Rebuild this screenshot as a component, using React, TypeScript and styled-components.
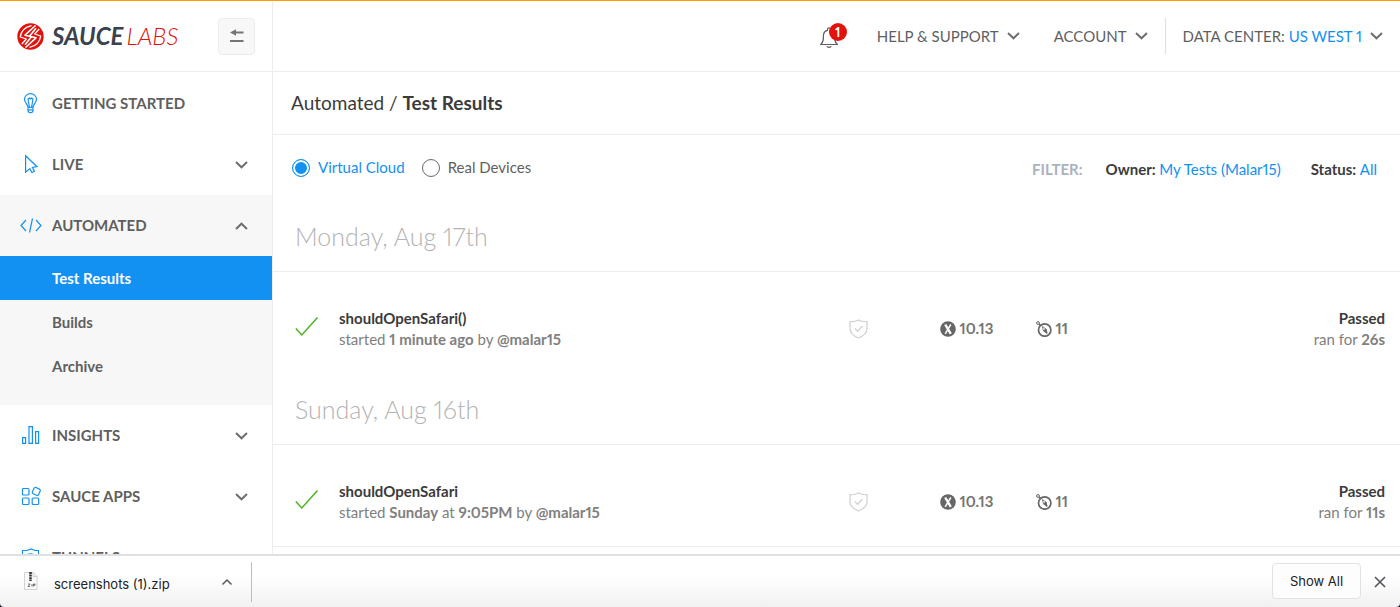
import React from "react";
import styled, { createGlobalStyle, css } from "styled-components";

const GlobalStyle = createGlobalStyle`
  *, *::before, *::after { box-sizing: border-box; }
  body {
    margin: 0;
    background: #0b1320;
    color: #3b3b3b;
    font-family: Lato, "Open Sans", sans-serif;
    font-size: 16px;
    font-variant-numeric: proportional-nums;
    line-height: 21px;
  }
  h1, h2, p, ul { margin: 0; padding: 0; }
  ul { list-style: none; }
  a { text-decoration: none; }
  button { font: inherit; font-variant-numeric: inherit; color: inherit; background: none; border: 0; padding: 0; cursor: pointer; }
  svg { display: block; flex: none; }
`;

const blue = "#1391f2";
const line = "#ececec";

const Window = styled.div`
  display: flex;
  flex-direction: column;
  height: 100vh;
`;

const Page = styled.div`
  display: flex;
  flex: 1;
  min-height: 0;
  overflow: hidden;
  background: #fff;
  border-top: 1px solid #ff9a00;
`;

/* ---------- Sidebar ---------- */

const Sidebar = styled.aside`
  flex: none;
  width: 273px;
  border-right: 1px solid ${line};
`;

const Brand = styled.div`
  display: flex;
  align-items: center;
  justify-content: space-between;
  height: 71px;
  padding: 0 17px;
  border-bottom: 1px solid ${line};
`;

const Logo = styled.a`
  display: flex;
  align-items: center;
  gap: 8px;
  color: #3a424d;
  font-size: 24px;
  line-height: 28px;
  font-style: italic;
  font-weight: 700;
`;

const LogoThin = styled.span`
  margin-left: 3px;
  color: #e2120b;
  font-weight: 300;
`;

const CollapseButton = styled.button`
  display: grid;
  place-items: center;
  width: 37px;
  height: 37px;
  border: 1px solid ${line};
  border-radius: 4px;
  background: #f8f8f8;
`;

const Nav = styled.nav`
  padding-top: 1px;
`;

const Section = styled.div<{ $open?: boolean }>`
  ${(p) =>
    p.$open &&
    css`
      padding-bottom: 17px;
      background: #f7f7f7;
    `}
`;

const SectionButton = styled.button`
  display: grid;
  grid-template-columns: 22px 1fr 13px;
  align-items: center;
  gap: 10px;
  width: 100%;
  height: 61px;
  padding: 0 24px 0 20px;
  color: #5f5f5f;
  font-size: 15px;
  font-weight: 700;
  text-align: left;
`;

const SubLink = styled.a<{ $active?: boolean }>`
  display: flex;
  align-items: center;
  height: 44px;
  padding-left: 52px;
  color: ${(p) => (p.$active ? "#fff" : "#5f5f5f")};
  background: ${(p) => (p.$active ? blue : "transparent")};
  font-size: 15px;
  font-weight: 700;
`;

/* ---------- Main column ---------- */

const Main = styled.div`
  flex: 1;
  min-width: 0;
`;

const TopBar = styled.header`
  display: flex;
  align-items: center;
  justify-content: flex-end;
  height: 71px;
  padding-right: 17px;
  border-bottom: 1px solid ${line};
`;

const BellButton = styled.button`
  position: relative;
  margin-right: 39px;
  padding-top: 4px;
`;

const Badge = styled.span`
  position: absolute;
  top: 0;
  right: -9px;
  width: 18px;
  height: 18px;
  border-radius: 50%;
  background: #e3120b;
  color: #fff;
  font-size: 13px;
  font-weight: 700;
  line-height: 18px;
  text-align: center;
`;

const MenuButton = styled.button`
  display: flex;
  align-items: center;
  gap: 8px;
  color: #5f5f5f;
  font-size: 15px;
  & + & { margin-left: 34px; }
`;

const Divider = styled.span`
  width: 1px;
  height: 36px;
  margin: 0 17px;
  background: #dedede;
`;

const Blue = styled.span`
  color: ${blue};
`;

const Title = styled.h1`
  display: flex;
  align-items: center;
  height: 63px;
  padding: 0 0 1px 18px;
  border-bottom: 1px solid ${line};
  font-size: 19px;
  font-weight: 400;
  white-space: pre;
`;

const Toolbar = styled.div`
  display: flex;
  align-items: center;
  justify-content: space-between;
  height: 65px;
  padding: 0 23px 0 19px;
`;

const Choices = styled.div`
  display: flex;
  gap: 17px;
`;

const Choice = styled.label`
  display: flex;
  align-items: center;
  gap: 8px;
  color: #5f5f5f;
  font-size: 15px;
  &:has(input:checked) { color: ${blue}; }
`;

const Radio = styled.input`
  appearance: none;
  width: 18px;
  height: 18px;
  margin: 0;
  border: 1px solid #6b6b6b;
  border-radius: 50%;
  &:checked {
    border-color: ${blue};
    background: ${blue};
    box-shadow: inset 0 0 0 2px #fff;
  }
`;

const Filters = styled.div`
  display: flex;
  gap: 30px;
  padding-top: 4px;
  font-size: 15px;
`;

const FilterLabel = styled.span`
  margin-right: -7px;
  color: #aab3bd;
  font-weight: 700;
`;

const FilterButton = styled.button`
  font-weight: 700;
  ${Blue} { font-weight: 400; }
`;

const Day = styled.h2`
  display: flex;
  align-items: center;
  height: 72px;
  padding: 2px 22px 0;
  border-bottom: 1px solid ${line};
  color: #b3b3b3;
  font-size: 25px;
  font-weight: 300;
`;

const Tests = styled.ul<{ $ruled?: boolean }>`
  border-bottom: ${(p) => (p.$ruled ? `1px solid ${line}` : 0)};
`;

const Row = styled.li`
  display: grid;
  grid-template-columns: 44px 23fr 91px 96px 60px 13fr;
  align-items: center;
  height: 101px;
  padding: 12px 15px 0 22px;
  color: #808080;
  font-size: 15px;
`;

const TestName = styled.a`
  color: #3b3b3b;
  font-weight: 700;
`;

const Status = styled.p`
  color: #3b3b3b;
  font-weight: 700;
`;

const Platform = styled.span`
  display: flex;
  align-items: center;
  gap: 3px;
  color: #757575;
  font-weight: 700;
`;

const Outcome = styled.div`
  text-align: right;
`;

/* ---------- Download shelf ---------- */

const Shelf = styled.footer`
  display: flex;
  align-items: center;
  flex: none;
  height: 53px;
  padding: 0 14px 0 22px;
  border-top: 2px solid #dfe0e4;
  border-radius: 0 0 4px 4px;
  background: linear-gradient(#fff 40%, #f1f1f1);
  color: #202124;
  font-family: Inter, sans-serif;
  font-size: 13px;
`;

const Download = styled.button`
  display: flex;
  align-items: center;
  width: 230px;
  height: 40px;
  padding-right: 18px;
  border-right: 1px solid #bcbcbc;
`;

const FileName = styled.span`
  flex: 1;
  padding: 5px 0 0 15px;
  text-align: left;
`;

const ShowAll = styled.button`
  width: 89px;
  height: 36px;
  margin: 0 13px 1px auto;
  border: 1px solid #e2e2e4;
  border-radius: 4px;
  background: #fdfdfd;
`;

/* ---------- Icons ---------- */

const Chevron = ({ up }: { up?: boolean }) => (
  <svg width="13" height="8" viewBox="0 0 13 8" fill="none" stroke="#6e6e6e" strokeWidth="2">
    <path d={up ? "M1 7l5.500-5.300L12 7" : "M1 1l5.500 5.300L12 1"} />
  </svg>
);

const ShelfChevron = () => (
  <svg width="12" height="8" viewBox="0 0 12 8" fill="none" stroke="#55585c" strokeWidth="1.500">
    <path d="M1.500 6.500L6 2l4.500 4.500" />
  </svg>
);

const Outline = ({ children }: { children: React.ReactNode }) => (
  <svg width="22" height="22" viewBox="0 0 22 22" fill="none" stroke={blue} strokeWidth="1.200">
    {children}
  </svg>
);

const Bulb = () => (
  <Outline>
    <path d="M8 14.500c0-3.500-3.500-4.500-3.500-8.200a6 5.600 0 0 1 12 0c0 3.700-3.500 4.700-3.500 8.200zM8 14.500v3c0 1.500 1.200 2.200 2.500 2.200s2.500-.7 2.500-2.200v-3M8 16.800h5M9.500 14.500L8 6l1.500-1 1 1 1-1L13 6l-1.500 8.500" />
  </Outline>
);
const Cursor = () => (
  <Outline>
    <path d="M5.600 1.700v16.500l4.200-3.600 2.100 3.900 2.500-1.200-2-3.900 4.600-.7z" />
  </Outline>
);
const Code = () => (
  <Outline>
    <path d="M6 5L1 10.500 6 16M16 5l5 5.500-5 5.500M12.500 3.500l-3 14" />
  </Outline>
);
const Bars = () => (
  <Outline>
    <path d="M2.600 12.600h3v5.800h-3zM9 1.600h3.400v16.800H9zM15.600 6.600h3v11.800h-3z" />
  </Outline>
);
const Apps = () => (
  <Outline>
    <rect x="2.500" y="2.500" width="6.500" height="6.500" rx="1" />
    <rect x="2.500" y="12" width="6.500" height="6.500" rx="1" />
    <rect x="12.200" y="12" width="6.500" height="6.500" rx="1" />
    <rect x="12.900" y="2" width="6.800" height="6.800" rx="1.500" transform="rotate(25 16.300 5.400)" />
  </Outline>
);
const Tunnel = () => (
  <Outline>
    <path d="M2.500 3.500H7l4-1.500 4 1.500h3.500v10c0 3-4 5-8 6.500-4-1.500-8-3.500-8-6.500zM6 9c2-3 7-3 9 0" />
  </Outline>
);

const LogoMark = () => (
  <svg width="27" height="27" viewBox="0 0 27 27">
    <circle cx="13.500" cy="13.500" r="13.200" fill="#e2120b" />
    <g fill="none" stroke="#fff" strokeWidth="1.600" strokeLinejoin="round">
      <path d="M18.500 2.500L8 12.200l6.500 1.600-6.500 8" />
      <path d="M8.500 24.500L19 14.800l-6.500-1.600 6.500-8" />
      <path d="M14.500 2.600C8 4 4 8.500 3.300 14l6 2-4.500 5" strokeWidth="1.300" />
      <path d="M12.500 24.400C19 23 23 18.500 23.700 13l-6-2 4.500-5" strokeWidth="1.300" />
    </g>
  </svg>
);

const CollapseIcon = () => (
  <svg width="14" height="14" viewBox="0 0 14 14" fill="#757575">
    <path d="M0 3.500L6 .2v2.300h7.500v2H6v2.300zM0 11h13.500v2H0z" />
  </svg>
);

const Bell = () => (
  <svg width="18" height="22" viewBox="0 0 18 22" fill="none" stroke="#5f5f5f" strokeWidth="1.200">
    <path d="M.8 17.500h16.500c-2-1.800-2.600-3.500-2.600-6.500V9c0-3-1.700-5-4-5.600V2.600a1.600 1.600 0 0 0-3.300 0v.8C5 4 3.400 6 3.400 9v2c0 3-.6 4.700-2.600 6.500zM6.800 19.300c.5 1.300 4 1.300 4.500 0" />
  </svg>
);

const Check = () => (
  <svg width="24" height="26" viewBox="0 0 24 26" fill="none" stroke="#4db520" strokeWidth="1.500">
    <path d="M.8 12.500l6 6.500L22.500 1.500" />
  </svg>
);

const Shield = () => (
  <svg width="19" height="20" viewBox="0 0 19 20" fill="none" stroke="#cfcfcf" strokeWidth="1.200">
    <path d="M1 2.700c3.500.2 6-.3 8.500-1.700 2.500 1.400 5 1.900 8.500 1.700v7c0 4.500-4 7.300-8.500 9.300C5 17 1 14.200 1 9.700z" />
    <path d="M6 9.500l2.700 2.800 4.600-5.300" />
  </svg>
);

const MacBadge = () => (
  <svg width="16" height="16" viewBox="0 0 16 16">
    <circle cx="8" cy="8" r="7.800" fill="#666" />
    <path d="M5.200 3.500l5.600 9.300" stroke="#fff" strokeWidth="2.400" />
    <path d="M10.800 3.500l-5.600 9.300" stroke="#fff" strokeWidth="1.500" />
  </svg>
);

const Compass = () => (
  <svg width="16" height="16" viewBox="0 0 16 16" fill="none" stroke="#666">
    <circle cx="8.700" cy="9" r="6.200" strokeWidth="1.700" />
    <circle cx="2" cy="2" r="1.400" />
    <path d="M3 3l1.700 1.700" strokeWidth="1.500" />
    <path d="M6.300 5.500l3.700 2.500 1 4.300L7.500 9.800z" strokeWidth=".8" />
    <path d="M10 8l1 4.300-3.500-2.500z" fill="#666" strokeWidth=".8" />
  </svg>
);

const ZipFile = () => (
  <svg width="17" height="20" viewBox="0 0 17 20">
    <path d="M2.500.5h8.700l3.800 4v13H2.500z" fill="#fafafa" stroke="#d3d3d3" />
    <path d="M11 .5v4h4" fill="none" stroke="#d3d3d3" />
    <path d="M8.500 0v9" stroke="#333" strokeWidth="2.500" strokeDasharray="2 .6" />
    <path d="M6 12h2l-2 2.500h2M10 12v2.500M11.500 14.500V12H13v1.300h-1.500" fill="none" stroke="#555" strokeWidth=".8" />
  </svg>
);

const Close = () => (
  <svg width="12" height="12" viewBox="0 0 12 12" stroke="#55585c" strokeWidth="1.700">
    <path d="M1 1l10 10M11 1L1 11" />
  </svg>
);

/* ---------- Page ---------- */

const sections = [
  { label: "GETTING STARTED", icon: <Bulb />, leaf: true },
  { label: "LIVE", icon: <Cursor /> },
  { label: "AUTOMATED", icon: <Code />, children: ["Test Results", "Builds", "Archive"] },
  { label: "INSIGHTS", icon: <Bars /> },
  { label: "SAUCE APPS", icon: <Apps /> },
  { label: "TUNNELS", icon: <Tunnel /> },
];

const days = [
  {
    date: "Monday, Aug 17th",
    ruled: false,
    tests: [{ name: "shouldOpenSafari()", when: <b>1 minute ago</b>, time: "26s" }],
  },
  {
    date: "Sunday, Aug 16th",
    ruled: true,
    tests: [{ name: "shouldOpenSafari", when: <><b>Sunday</b> at <b>9:05PM</b></>, time: "11s" }],
  },
];

export default function App() {
  return (
    <Window>
      <GlobalStyle />
      <Page>
        <Sidebar>
          <Brand>
            <Logo href="#">
              <LogoMark />
              <span>SAUCE<LogoThin>LABS</LogoThin></span>
            </Logo>
            <CollapseButton aria-label="Collapse menu"><CollapseIcon /></CollapseButton>
          </Brand>
          <Nav>
            {sections.map((s) => (
              <Section key={s.label} $open={!!s.children}>
                <SectionButton>
                  {s.icon}
                  <span>{s.label}</span>
                  {!s.leaf && <Chevron up={!!s.children} />}
                </SectionButton>
                {s.children?.map((c, i) => (
                  <SubLink key={c} href="#" $active={i === 0}>{c}</SubLink>
                ))}
              </Section>
            ))}
          </Nav>
        </Sidebar>
        <Main>
          <TopBar>
            <BellButton aria-label="Notifications"><Bell /><Badge>1</Badge></BellButton>
            <MenuButton>HELP &amp; SUPPORT <Chevron /></MenuButton>
            <MenuButton>ACCOUNT <Chevron /></MenuButton>
            <Divider />
            <MenuButton><span>DATA CENTER: <Blue>US WEST 1</Blue></span><Chevron /></MenuButton>
          </TopBar>
          <Title>Automated / <b>Test Results</b></Title>
          <Toolbar>
            <Choices>
              <Choice><Radio type="radio" name="devices" defaultChecked />Virtual Cloud</Choice>
              <Choice><Radio type="radio" name="devices" />Real Devices</Choice>
            </Choices>
            <Filters>
              <FilterLabel>FILTER:</FilterLabel>
              <FilterButton>Owner: <Blue>My Tests (Malar15)</Blue></FilterButton>
              <FilterButton>Status: <Blue>All</Blue></FilterButton>
            </Filters>
          </Toolbar>
          {days.map((d) => (
            <section key={d.date}>
              <Day>{d.date}</Day>
              <Tests $ruled={d.ruled}>
                {d.tests.map((t) => (
                  <Row key={t.name}>
                    <Check />
                    <div>
                      <TestName href="#">{t.name}</TestName>
                      <p>started {t.when} by <b>@malar15</b></p>
                    </div>
                    <Shield />
                    <Platform><MacBadge />10.13</Platform>
                    <Platform><Compass />11</Platform>
                    <Outcome>
                      <Status>Passed</Status>
                      <p>ran for <b>{t.time}</b></p>
                    </Outcome>
                  </Row>
                ))}
              </Tests>
            </section>
          ))}
        </Main>
      </Page>
      <Shelf>
        <Download>
          <ZipFile />
          <FileName>screenshots (1).zip</FileName>
          <ShelfChevron />
        </Download>
        <ShowAll>Show All</ShowAll>
        <button aria-label="Close"><Close /></button>
      </Shelf>
    </Window>
  );
}
